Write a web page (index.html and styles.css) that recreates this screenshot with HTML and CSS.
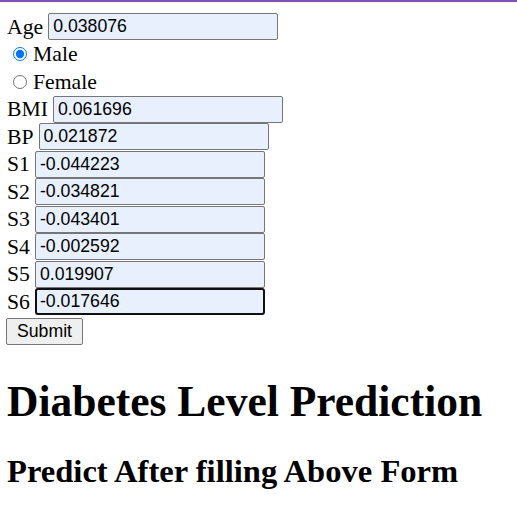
FILE: index.html
```html
<!DOCTYPE html>
<html>
<head>
<meta charset="utf-8">
<link rel="stylesheet" href="styles.css">
</head>
<body>
<div class="topbar"></div>
<main class="page">
  <form class="form">
    <div class="row"><label class="label">Age</label><input class="field" type="text" value="0.038076"></div>
    <div class="row radio-row"><input class="radio" type="radio" name="sex" checked><label class="label">Male</label></div>
    <div class="row radio-row"><input class="radio" type="radio" name="sex"><label class="label">Female</label></div>
    <div class="row"><label class="label">BMI</label><input class="field" type="text" value="0.061696"></div>
    <div class="row"><label class="label">BP</label><input class="field" type="text" value="0.021872"></div>
    <div class="row"><label class="label">S1</label><input class="field" type="text" value="-0.044223"></div>
    <div class="row"><label class="label">S2</label><input class="field" type="text" value="-0.034821"></div>
    <div class="row"><label class="label">S3</label><input class="field" type="text" value="-0.043401"></div>
    <div class="row"><label class="label">S4</label><input class="field" type="text" value="-0.002592"></div>
    <div class="row"><label class="label">S5</label><input class="field" type="text" value="0.019907"></div>
    <div class="row"><label class="label">S6</label><input class="field field-focus" type="text" value="-0.017646"></div>
    <div class="submit-row"><button class="submit" type="button">Submit</button></div>
  </form>
  <h1 class="title">Diabetes Level Prediction</h1>
  <h2 class="subtitle">Predict After filling Above Form</h2>
</main>
</body>
</html>
```
FILE: styles.css
```css
html, body {
  margin: 0;
  padding: 0;
  background: #ffffff;
}
body {
  font-family: "Liberation Serif", "Times New Roman", serif;
  font-size: 21.7px;
  color: #000;
}
.topbar {
  height: 2px;
  background: #7f52b3;
  border-bottom: 1px solid #f6f4ef;
}
.page {
  padding: 0 7px;
}
.form {
  display: flex;
  flex-direction: column;
  padding-top: 10px;
}
.row {
  display: flex;
  align-items: center;
  gap: 5px;
  height: 27.5px;
}
.radio-row {
  gap: 6px;
  height: 27.5px;
  padding-left: 6px;
}
.label {
  line-height: 24px;
}
.field {
  box-sizing: border-box;
  width: 230px;
  height: 27px;
  margin: 0;
  padding: 0 3px 0 4px;
  border: 1px solid #767676;
  border-radius: 2px;
  background: #e8f0fe;
  font-family: "Liberation Sans", Arial, sans-serif;
  font-size: 17.7px;
  color: #000;
  outline: none;
}
.field-focus {
  border: 2px solid #101010;
  border-radius: 3px;
  padding-left: 3px;
}
.radio {
  width: 14px;
  height: 14px;
  margin: 0;
  accent-color: #0075ff;
}
.submit-row {
  padding-top: 2px;
}
.submit {
  box-sizing: border-box;
  width: 77px;
  height: 27px;
  margin: 0 0 0 -1px;
  padding: 0;
  border: 1px solid #767676;
  border-radius: 2px;
  background: #efefef;
  font-family: "Liberation Sans", Arial, sans-serif;
  font-size: 17.7px;
  color: #000;
}
.title {
  font-size: 43.5px;
  font-weight: bold;
  margin: 31px 0 0 0;
  line-height: normal;
}
.subtitle {
  font-size: 32.6px;
  font-weight: bold;
  margin: 27.5px 0 0 0;
  line-height: normal;
}
```
